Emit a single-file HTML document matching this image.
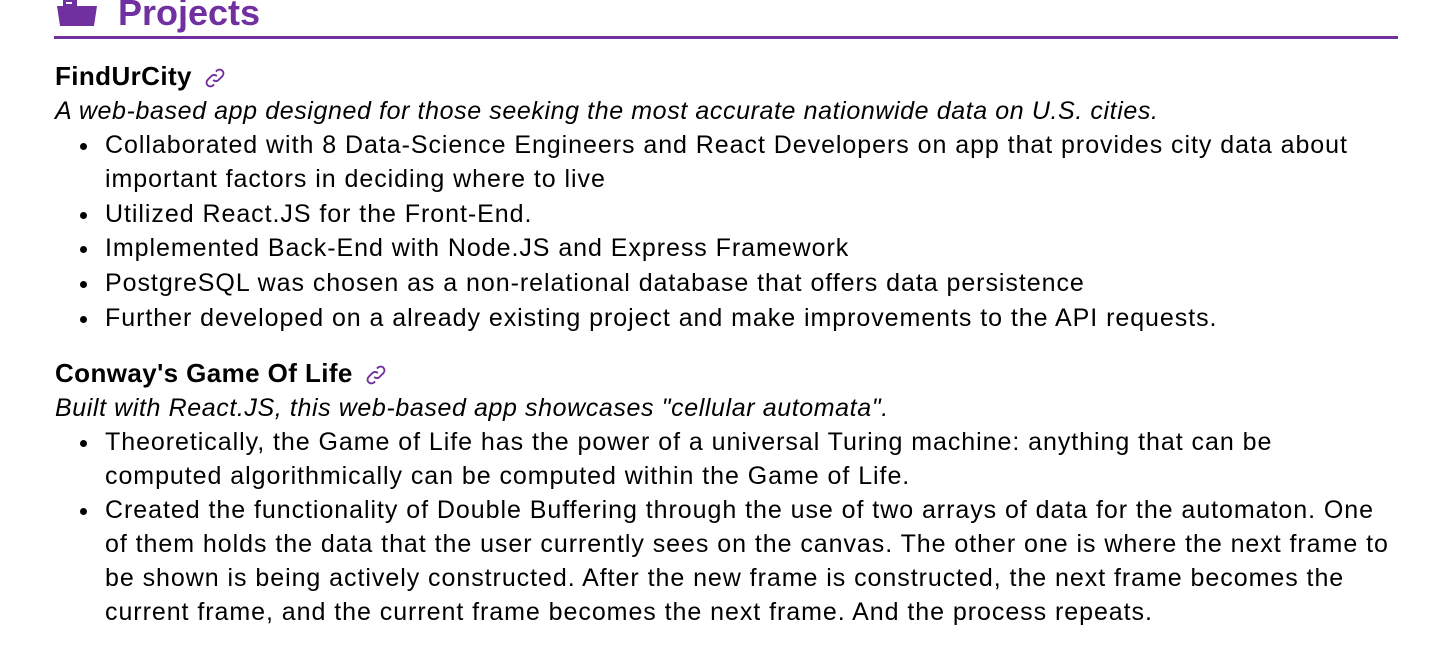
<!DOCTYPE html>
<html><head><meta charset="utf-8"><style>
body{margin:0;width:1442px;height:670px;overflow:hidden;background:#fff;font-family:"Liberation Sans",sans-serif;color:#000;position:relative}
.h{position:absolute;left:118px;top:-9px;font-size:36px;font-weight:bold;color:#7030a0;line-height:44px}
.rule{position:absolute;left:54px;top:36px;width:1344px;height:3px;background:#7030a0}
.t{position:absolute;left:55px;font-weight:bold;font-size:26px;letter-spacing:0.4px;white-space:nowrap;line-height:32px}
.d{position:absolute;left:55px;font-style:italic;font-size:25px;letter-spacing:0.6px;white-space:nowrap;line-height:32px}
.l{position:absolute;left:105px;font-size:25px;letter-spacing:0.95px;white-space:nowrap;line-height:34px}
.l::before{content:"";position:absolute;left:-25px;top:15px;width:7px;height:7px;border-radius:50%;background:#000}
svg.k{vertical-align:middle;margin-left:12px}
</style></head><body>
<svg style="position:absolute;left:55px;top:0" width="44" height="28" viewBox="0 0 44 28"><path d="M2 6h40l-3 20H5z" fill="#7030a0"/><rect x="8" y="0" width="14" height="8" fill="#7030a0"/><rect x="11" y="2" width="6" height="2" fill="#fff"/></svg>
<div class="h">Projects</div>
<div class="rule"></div>
<div class="t" style="top:60px">FindUrCity<svg class="k" width="22" height="22" viewBox="0 0 24 24" fill="none" stroke="#7030a0" stroke-width="2"><path d="M10 14a4 4 0 0 0 6 0l4-4a4 4 0 0 0-6-6l-1 1"/><path d="M14 10a4 4 0 0 0-6 0l-4 4a4 4 0 0 0 6 6l1-1"/></svg></div>
<div class="d" style="top:95px">A web-based app designed for those seeking the most accurate nationwide data on U.S. cities.</div>
<div class="l" style="top:128px">Collaborated with 8 Data-Science Engineers and React Developers on app that provides city data about<br>important factors in deciding where to live</div>
<div class="l" style="top:197px">Utilized React.JS for the Front-End.</div>
<div class="l" style="top:231px">Implemented Back-End with Node.JS and Express Framework</div>
<div class="l" style="top:266px">PostgreSQL was chosen as a non-relational database that offers data persistence</div>
<div class="l" style="top:301px">Further developed on a already existing project and make improvements to the API requests.</div>
<div class="t" style="top:357px">Conway's Game Of Life<svg class="k" width="22" height="22" viewBox="0 0 24 24" fill="none" stroke="#7030a0" stroke-width="2"><path d="M10 14a4 4 0 0 0 6 0l4-4a4 4 0 0 0-6-6l-1 1"/><path d="M14 10a4 4 0 0 0-6 0l-4 4a4 4 0 0 0 6 6l1-1"/></svg></div>
<div class="d" style="top:392px">Built with React.JS, this web-based app showcases "cellular automata".</div>
<div class="l" style="top:425px">Theoretically, the Game of Life has the power of a universal Turing machine: anything that can be<br>computed algorithmically can be computed within the Game of Life.</div>
<div class="l" style="top:493px">Created the functionality of Double Buffering through the use of two arrays of data for the automaton. One<br>of them holds the data that the user currently sees on the canvas. The other one is where the next frame to<br>be shown is being actively constructed. After the new frame is constructed, the next frame becomes the<br>current frame, and the current frame becomes the next frame. And the process repeats.</div>
</body></html>
